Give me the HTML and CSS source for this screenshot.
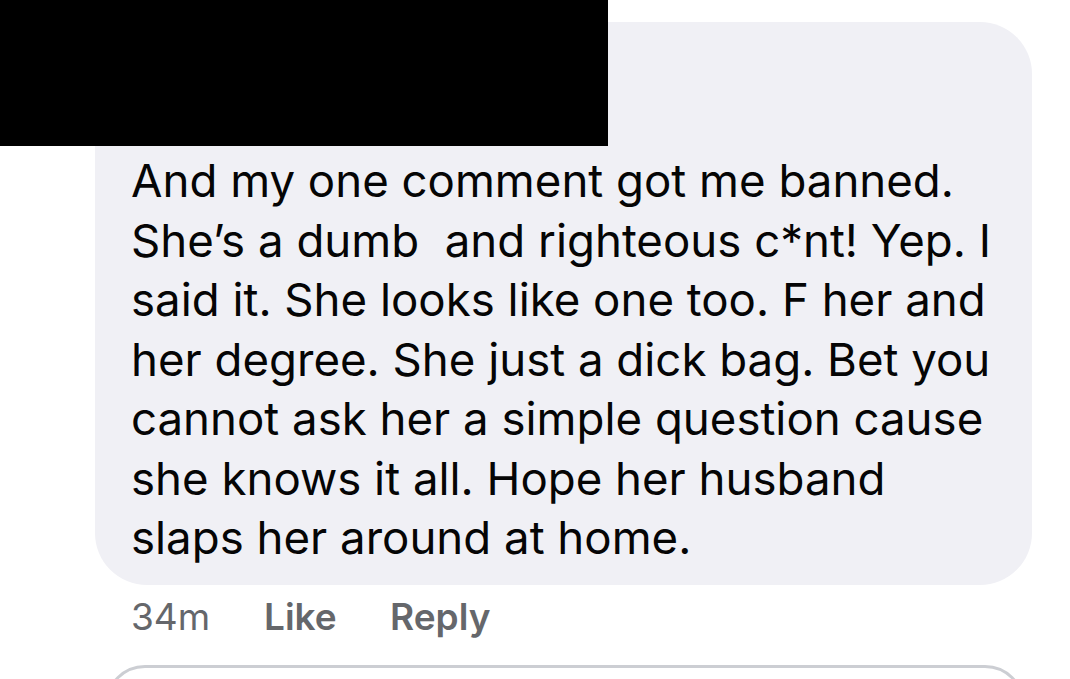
FILE: index.html
```html
<!DOCTYPE html>
<html>
<head>
<meta charset="utf-8">
<link rel="stylesheet" href="styles.css">
</head>
<body>
<div class="page">
  <div class="redact"></div>
  <div class="comment">
    <div class="bubble">
      <div class="author"></div>
      <p class="text">And my one comment got me banned.<br>She’s a dumb&nbsp; and righteous c*nt! Yep. I<br>said it. She looks like one too. F her and<br>her degree. She just a dick bag. Bet you<br>cannot ask her a simple question cause<br>she knows it all. Hope her husband<br>slaps her around at home.</p>
    </div>
    <div class="actions">
      <span class="time">34m</span>
      <span class="act">Like</span>
      <span class="act">Reply</span>
    </div>
  </div>
  <div class="input"></div>
</div>
</body>
</html>
```
FILE: styles.css
```css
html, body {
  margin: 0;
  padding: 0;
  background: #ffffff;
  overflow: hidden;
}
.page {
  position: relative;
  width: 1070px;
  height: 679px;
  overflow: hidden;
  font-family: Inter, "Liberation Sans", Arial, sans-serif;
}
.redact {
  position: absolute;
  left: 0;
  top: 0;
  width: 608px;
  height: 146px;
  background: #000;
}
.comment {
  padding-top: 22px;
  padding-left: 95px;
}
.bubble {
  width: 937px;
  height: 563px;
  box-sizing: border-box;
  background: #f0f0f5;
  border-radius: 52px;
  padding: 0 36px;
}
.author {
  height: 129px;
}
.text {
  margin: 0;
  font-size: 45.6px;
  line-height: 59.5px;
  color: #050505;
}
.actions {
  display: flex;
  align-items: baseline;
  padding-left: 36px;
  height: 64px;
  line-height: 64px;
  font-size: 37px;
  color: #65676b;
}
.time {
  width: 133px;
}
.act {
  font-weight: 600;
  width: 126px;
}
.input {
  margin: 16px 0 0 105px;
  width: 920px;
  height: 80px;
  box-sizing: border-box;
  border: 3px solid #ccced3;
  border-radius: 44px;
}
```
